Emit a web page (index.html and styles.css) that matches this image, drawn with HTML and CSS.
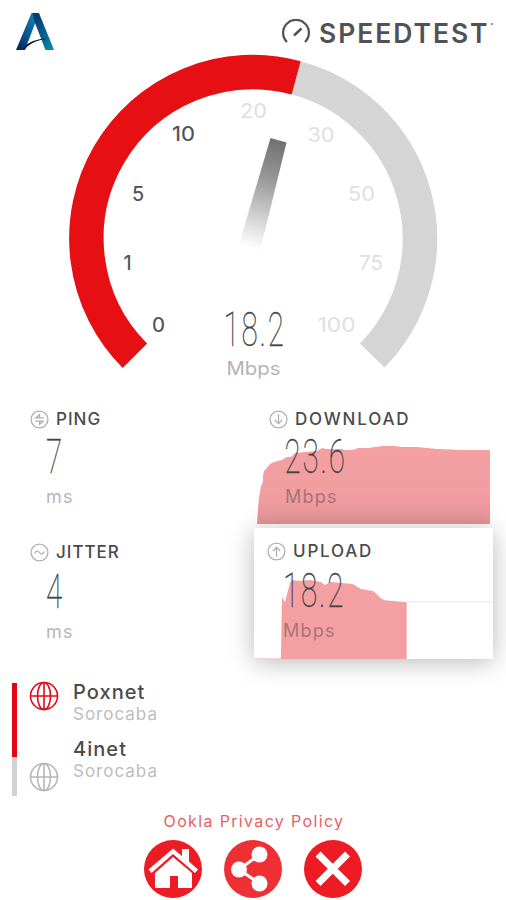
FILE: index.html
```html
<!DOCTYPE html>
<html lang="en">
<head>
<meta charset="utf-8">
<title>Speedtest</title>
<link rel="stylesheet" href="styles.css">
</head>
<body>
<main class="app">
  <header class="header">
    <svg class="logo" viewBox="0 0 38 37">
      <defs>
        <linearGradient id="logo-left" x1="1" y1="0" x2="0" y2="1"><stop offset="0" stop-color="#1689b5"/><stop offset=".55" stop-color="#075994"/><stop offset="1" stop-color="#071c50"/></linearGradient>
        <linearGradient id="logo-right" x1="0" y1="0" x2="1" y2="1"><stop offset="0" stop-color="#06355f"/><stop offset=".5" stop-color="#075a8c"/><stop offset="1" stop-color="#0990ad"/></linearGradient>
      </defs>
      <path d="M15.500 0H23L9 37H0Z" fill="url(#logo-left)"/>
      <path d="M16.500 0H23L38 37H29.500L19 10Z" fill="url(#logo-right)"/>
      <path d="M7 36C12 28 22 25 37 25.500C24 26 15 29 9 36Z" fill="#07142f"/>
    </svg>
    <div class="brand">
      <svg class="brand-icon" viewBox="0 0 30 26"><path d="M6 23A12.900 12.900 0 1 1 24 23" fill="none" stroke="#515256" stroke-width="2.200"/><path d="M13 16.500L20.500 9.500" stroke="#515256" stroke-width="2.400"/></svg>
      <span class="brand-name">SPEEDTEST</span><span class="brand-mark">•</span>
    </div>
  </header>

  <section class="gauge">
    <svg class="gauge-dial" viewBox="0 54 506 341">
      <defs><linearGradient id="needle" x1="278" y1="139" x2="250" y2="248" gradientUnits="userSpaceOnUse"><stop offset="0" stop-color="#707070"/><stop offset=".35" stop-color="#969696"/><stop offset="1" stop-color="#fff"/></linearGradient></defs>
      <path d="M296.200 77.900A166.500 166.500 0 0 1 372.200 355.500" fill="none" stroke="#d5d5d5" stroke-width="34.500"/>
      <path d="M134.900 355.800A166.300 166.300 0 0 1 296.200 77.900" fill="none" stroke="#e50f14" stroke-width="34.500"/>
      <path d="M270.500 138L286.500 142.500L260 251L239 244.500Z" fill="url(#needle)"/>
      <g class="passed">
        <text x="152" y="332" textLength="13" lengthAdjust="spacingAndGlyphs">0</text><text x="123.500" y="270">1</text><text x="132" y="201">5</text><text x="172" y="141" textLength="23" lengthAdjust="spacingAndGlyphs">10</text>
      </g>
      <g class="ahead">
        <text x="240" y="118" textLength="27" lengthAdjust="spacingAndGlyphs">20</text><text x="307.500" y="142" textLength="27" lengthAdjust="spacingAndGlyphs">30</text><text x="348" y="201" textLength="27" lengthAdjust="spacingAndGlyphs">50</text><text x="359" y="270" textLength="24" lengthAdjust="spacingAndGlyphs">75</text><text x="317.500" y="332" textLength="38" lengthAdjust="spacingAndGlyphs">100</text>
      </g>
      <text class="digits" transform="translate(223.500 346) scale(.61 1)" textLength="99">18.2</text>
      <text class="gauge-unit" x="226.500" y="374.500" textLength="54" lengthAdjust="spacingAndGlyphs">Mbps</text>
    </svg>
  </section>

  <section class="metrics">
    <article class="metric">
      <h2 class="metric-title"><svg class="metric-icon" viewBox="0 0 18 18"><circle cx="9" cy="9" r="8"/><path d="M13 7.500H5.500L9 4.500V7M5 10.500H12.500L9 13.500V11"/></svg><span class="t-ping">PING</span></h2>
      <svg class="value" viewBox="0 0 76 62"><text class="digits" transform="translate(1 47) scale(.61 1)">7</text></svg>
      <p class="unit">ms</p>
    </article>
    <article class="metric download">
      <svg class="chart" viewBox="0 0 233 78" preserveAspectRatio="none">
        <defs><linearGradient id="area" x1="0" y1="0" x2="0" y2="1"><stop offset="0" stop-color="#f4a0a2"/><stop offset=".6" stop-color="#f29da0"/><stop offset="1" stop-color="#e59599"/></linearGradient></defs>
        <path d="M0 78L1 62L2 52L4 40L6 36V30L7 25L9 23L13 18L17 16L25 14L30 11H34L38 7L48 6L60 5L65 2L70 3L85 3L88 4H96L101 2L112 2L118 1L126 0H138L144 1H160L180 3L206 4H233V78Z" fill="url(#area)"/>
      </svg>
      <h2 class="metric-title"><svg class="metric-icon" viewBox="0 0 18 18"><circle cx="9" cy="9" r="8"/><path d="M9 4V13M5.500 9.500L9 13L12.500 9.500"/></svg><span class="t-download">DOWNLOAD</span></h2>
      <svg class="value" viewBox="0 0 76 62"><text class="digits" transform="translate(.5 47) scale(.61 1)" textLength="99">23.6</text></svg>
      <p class="unit">Mbps</p>
    </article>
    <article class="metric jitter">
      <h2 class="metric-title"><svg class="metric-icon" viewBox="0 0 18 18"><circle cx="9" cy="9" r="8"/><path d="M4.500 10C5.500 6.500 8 7.500 9 9S12.500 11 13.500 8"/></svg><span class="t-jitter">JITTER</span></h2>
      <svg class="value" viewBox="0 0 76 62"><text class="digits" transform="translate(1 47) scale(.61 1)">4</text></svg>
      <p class="unit">ms</p>
    </article>
    <article class="metric upload">
      <svg class="chart" viewBox="0 0 239 78" preserveAspectRatio="none">
        <path d="M153 21.500H239" stroke="#e7e7e7"/>
        <path d="M0 77.500H27L28 17L31 22L36 3L38 0L46 1L56 0L67 2L71 5L77 2L99 4L107 9L120 11L127 18L131 20L153 22V78H0Z" fill="#f4a0a2"/>
      </svg>
      <h2 class="metric-title"><svg class="metric-icon" viewBox="0 0 18 18"><circle cx="9" cy="9" r="8"/><path d="M9 14V5M5.500 8.500L9 5L12.500 8.500"/></svg><span class="t-upload">UPLOAD</span></h2>
      <svg class="value" viewBox="0 0 76 62"><text class="digits" transform="translate(1 47) scale(.61 1)" textLength="99">18.2</text></svg>
      <p class="unit">Mbps</p>
    </article>
  </section>

  <section class="servers">
    <div class="rail"></div>
    <div class="globes">
      <svg class="globe active" viewBox="0 0 30 30"><circle cx="15" cy="15" r="13.500"/><ellipse cx="15" cy="15" rx="6.500" ry="13.500"/><path d="M1.500 15H28.500M15 1.500V28.500"/></svg>
      <svg class="globe" viewBox="0 0 30 30"><circle cx="15" cy="15" r="13.500"/><ellipse cx="15" cy="15" rx="6.500" ry="13.500"/><path d="M1.500 15H28.500M15 1.500V28.500"/></svg>
    </div>
    <div class="names">
      <div class="server"><strong>Poxnet</strong><span>Sorocaba</span></div>
      <div class="server"><strong>4inet</strong><span>Sorocaba</span></div>
    </div>
  </section>

  <footer class="footer">
    <a class="policy">Ookla Privacy Policy</a>
    <nav class="actions">
      <svg viewBox="0 0 60 60"><circle cx="30" cy="30" r="29" fill="#ed1c24"/><path d="M30 9.500L39 17V10H46V22.500L55 30.500L52 34L30 15L8.500 34L5.500 30.500Z" fill="#fff"/><path d="M30 18L49 34V49H35V37H27V49H12V34Z" fill="#fff"/></svg>
      <svg viewBox="0 0 60 60"><circle cx="30" cy="30" r="29" fill="#ee3035"/><path d="M36.500 15.500L16 30.500L36.500 44.500" fill="none" stroke="#fff" stroke-width="3"/><g fill="#fff"><circle cx="36.500" cy="15.500" r="8"/><circle cx="16" cy="30.500" r="8"/><circle cx="36.500" cy="44.500" r="8"/></g></svg>
      <svg viewBox="0 0 60 60"><circle cx="30" cy="30" r="29" fill="#ed1c24"/><path d="M15 15L44.500 44.500M44.500 15L15 44.500" stroke="#fff" stroke-width="7"/></svg>
    </nav>
  </footer>
</main>
</body>
</html>
```

FILE: styles.css
```css
* { box-sizing: border-box; margin: 0; padding: 0; }
body { background: #fff; font-family: Inter, "Open Sans", sans-serif; color: #515256; }
svg { display: block; flex: none; }
.app { width: 506px; height: 900px; overflow: hidden; display: flex; flex-direction: column; }

.header { height: 54px; flex: none; display: flex; justify-content: space-between; padding: 13px 13px 0 16px; }
.logo { width: 38px; height: 37px; }
.brand { display: flex; height: 40px; padding-top: 6px; }
.brand-icon { width: 30px; height: 26px; margin-right: 8px; }
.brand-name { font-size: 26.500px; line-height: 29px; font-weight: 600; letter-spacing: 1.950px; width: 171px; white-space: nowrap; }
.brand-mark { font-size: 6px; line-height: 9px; width: 3px; }

.gauge { height: 341px; flex: none; }
.gauge-dial { width: 506px; height: 341px; }
.passed text, .ahead text { font-size: 20px; }
.passed { fill: #505154; stroke: #505154; stroke-width: .2; }
.ahead { fill: #e0e0e0; font-weight: 400; }
.gauge-unit { font-size: 18px; fill: #b4b4b4; }
.digits { font-family: Roboto, sans-serif; font-weight: 100; font-size: 48.500px; fill: #444; stroke: #444; stroke-width: .35; }

.metrics { display: grid; grid-template-columns: 254px 238.500px; grid-template-rows: 133px 131px; flex: none; }
.metric { position: relative; padding: 14px 0 0 30px; }
.metric-title { display: flex; align-items: center; height: 20px; gap: 7px; font-size: 17px; font-weight: 500; color: #4b4b4d; }
.metric-icon { width: 19px; height: 19px; fill: none; stroke: #b0b0b0; stroke-width: 1.200; }
.value { width: 76px; height: 62px; margin: -3px 0 -13px 15px; position: relative; }
.unit { font-size: 18px; line-height: 22px; margin: 11px 0 0 16px; color: #b5b5b5; letter-spacing: 1.200px; position: relative; }
.t-ping { letter-spacing: 1px; }
.t-download { letter-spacing: 1.800px; }
.t-jitter { letter-spacing: 1px; }
.t-upload { letter-spacing: 1.800px; }
.download { padding-left: 15px; }
.download .metric-title, .upload .metric-title { position: relative; }
.chart { position: absolute; height: 78px; }
.download .chart { left: 2.500px; top: 51px; width: 233px; }
.upload .chart { left: 0; bottom: 0; width: 238.500px; height: 79px; }
.upload { padding: 13px 0 0 13px; background: #fff; box-shadow: 0 3px 24px rgba(0, 0, 0, .28); }
.jitter .value, .upload .value { margin-top: -1px; }
.download .unit, .upload .unit { color: rgba(90, 70, 75, .5); }

.servers { height: 145px; flex: none; padding: 24px 0 0 12px; display: flex; }
.rail { width: 5px; height: 113px; background: linear-gradient(#e30613 74px, #d2d2d2 74px); }
.globes { display: flex; flex-direction: column; gap: 51px; margin: -2px 0 0 12px; }
.globe { width: 30px; height: 30px; fill: none; stroke: #b7b7b7; stroke-width: 1.600; }
.globe.active { stroke: #e20a18; }
.names { margin: -3px 0 0 14px; }
.server { height: 57px; display: flex; flex-direction: column; }
.server strong { font-size: 20px; font-weight: 500; line-height: 24px; letter-spacing: 1.050px; color: #4b4b4d; }
.server span { font-size: 17px; line-height: 20px; letter-spacing: 1px; color: #bdbdbd; }

.footer { display: flex; flex-direction: column; align-items: center; padding-top: 6px; }
.policy { font-size: 16px; line-height: 22px; letter-spacing: 1.350px; margin-left: 2px; color: #e76067; white-space: nowrap; }
.actions { display: flex; gap: 20px; margin-top: 7px; }
.actions svg { width: 60px; height: 60px; }
```
